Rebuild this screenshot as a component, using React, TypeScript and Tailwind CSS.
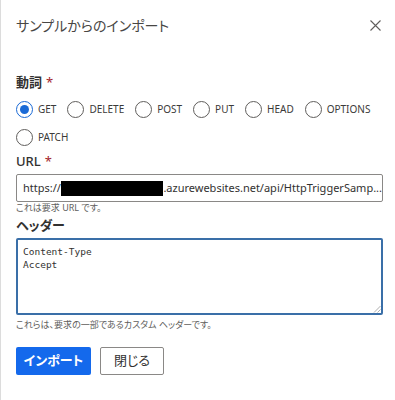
import React from "react";

const radios = ["GET", "DELETE", "POST", "PUT", "HEAD", "OPTIONS", "PATCH"];

function Radio({ label, checked }: { label: string; checked?: boolean }) {
  return (
    <div className="flex items-center h-[20px]">
      <span
        className={
          "flex items-center justify-center w-[17px] h-[17px] rounded-full border " +
          (checked ? "border-[#1a6ad6]" : "border-[#605e5c]")
        }
      >
        {checked && <span className="w-[9px] h-[9px] rounded-full bg-[#1a6ad6]" />}
      </span>
      <span className="ml-[5px] text-[10px] text-[#3b3a39] leading-none">{label}</span>
    </div>
  );
}

export default function App() {
  return (
    <div className="w-[395px] h-[400px] bg-white border-l border-[#dcdcdc] pl-[15px] pr-[12px] font-['Noto_Sans','Noto_Sans_CJK_JP',sans-serif] [font-feature-settings:'palt'] text-[#323130]">
      <div className="h-[50px] flex items-center justify-between">
        <div className="text-[14px] text-[#484644]">サンプルからのインポート</div>
        <svg width="11" height="11" viewBox="0 0 11 11" className="mr-[2px]">
          <path d="M0.5 0.5L10.5 10.5M10.5 0.5L0.5 10.5" stroke="#605e5c" strokeWidth="1.1" />
        </svg>
      </div>

      <div className="mt-[23px] h-[20px] flex items-center text-[13px] font-semibold">
        動詞<span className="ml-[4px] text-[#a4262c] font-normal">*</span>
      </div>

      <div className="mt-[6px] flex flex-wrap gap-x-[11px] gap-y-[8px]">
        {radios.map((r) => (
          <Radio key={r} label={r} checked={r === "GET"} />
        ))}
      </div>

      <div className="mt-[5px] h-[20px] flex items-center text-[13px] font-medium">
        URL<span className="ml-[4px] text-[#a4262c] font-normal">*</span>
      </div>

      <div className="mt-[2px] h-[28px] border border-[#8a8886] rounded-[2px] flex items-center pl-[6px] overflow-hidden whitespace-nowrap text-[11px] text-[#323130]">
        <span>https://</span>
        <span className="inline-block w-[106px] h-[15px] bg-black" />
        <span>.azurewebsites.net/api/HttpTriggerSamp...</span>
      </div>

      <div className="h-[12px] flex items-center text-[9px] text-[#605e5c]">
        これは要求 URL です。
      </div>

      <div className="mt-[2px] h-[20px] flex items-center text-[13px] font-semibold">
        ヘッダー
      </div>

      <div className="mt-[2px] h-[77px] border-2 border-[#3a6fa8] rounded-[2px] relative pl-[5px] pt-[5px] font-['DejaVu_Sans_Mono',monospace] text-[9.5px] leading-[13px] text-[#323130]">
        <div>Content-Type</div>
        <div>Accept</div>
        <svg width="8" height="8" viewBox="0 0 8 8" className="absolute right-0 bottom-0">
          <path d="M7.5 1L1 7.5M7.5 4.5L4.5 7.5" stroke="#9a9a9a" strokeWidth="0.8" />
        </svg>
      </div>

      <div className="mt-[4px] h-[12px] flex items-center text-[9px] text-[#605e5c]">
        これらは、要求の一部であるカスタム ヘッダーです。
      </div>

      <div className="mt-[16px] flex gap-[9px]">
        <div className="w-[75px] h-[28px] rounded-[2px] bg-[#1469ec] text-white text-[13px] font-semibold flex items-center justify-center">
          インポート
        </div>
        <div className="w-[64px] h-[28px] rounded-[2px] border border-[#8a8886] bg-white text-[13px] text-[#323130] flex items-center justify-center">
          閉じる
        </div>
      </div>
    </div>
  );
}
